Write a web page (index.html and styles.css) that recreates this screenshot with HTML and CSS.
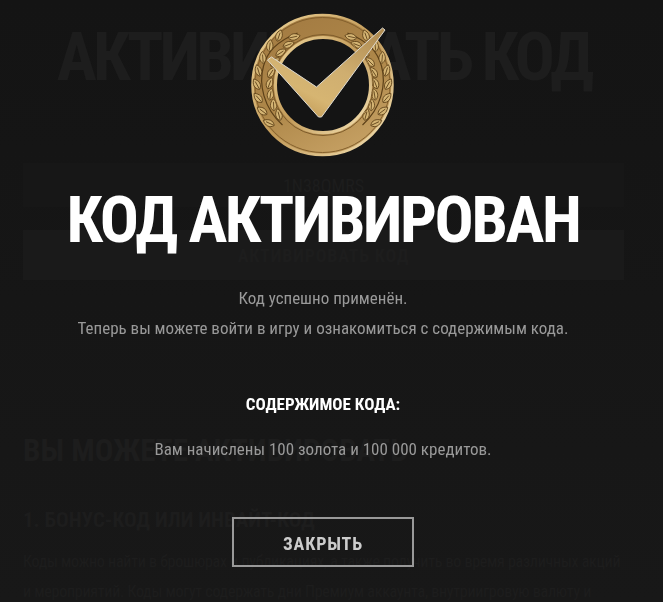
FILE: index.html
```html
<!DOCTYPE html>
<html lang="ru">
<head>
    <meta charset="UTF-8">
    <meta name="viewport" content="width=device-width, initial-scale=1.0">
    <title>Активировать код</title>
    <link rel="stylesheet" href="styles.css">
</head>
<body>
    <div class="page">
        <h1 class="page-title">АКТИВИРОВАТЬ КОД</h1>
        <div class="code-field">1N38QMRS</div>
        <div class="code-submit">АКТИВИРОВАТЬ КОД</div>
        <h2 class="page-sub">ВЫ МОЖЕТЕ АКТИВИРОВАТЬ</h2>
        <h3 class="page-sub3">1. БОНУС-КОД ИЛИ ИНВАЙТ-КОД</h3>
        <p class="page-text">Коды можно найти в брошюрах и публикациях, а также получить во время различных акций</p>
        <p class="page-text">и мероприятий. Коды могут содержать дни Премиум аккаунта, внутриигровую валюту и</p>
    </div>

    <div class="overlay">
        <svg class="medal" viewBox="3.500 0 180 170" width="180" height="170">
            <defs>
                <linearGradient id="ringGrad" x1="0.25" y1="0" x2="0.75" y2="1">
                    <stop offset="0" stop-color="#a37b42"/>
                    <stop offset="0.5" stop-color="#ae8749"/>
                    <stop offset="1" stop-color="#c7a265"/>
                </linearGradient>
                <linearGradient id="rimGrad" x1="0" y1="0" x2="1" y2="1">
                    <stop offset="0" stop-color="#f0d79c"/>
                    <stop offset="0.5" stop-color="#c29a58"/>
                    <stop offset="1" stop-color="#f8e7ba"/>
                </linearGradient>
                <linearGradient id="checkGrad" x1="0.9" y1="0" x2="0.2" y2="1">
                    <stop offset="0" stop-color="#b08c52"/>
                    <stop offset="0.45" stop-color="#cfae70"/>
                    <stop offset="0.75" stop-color="#d6b572"/>
                    <stop offset="1" stop-color="#bd9450"/>
                </linearGradient>
                <path id="leaf" d="M0 0C-4.500 -3 -4 -8 0 -12C4 -8 4.500 -3 0 0ZM0 -1V-9" fill="#d4b473" stroke="#5c4018" stroke-width="0.8"/>
                <g id="laurel">
                    <path d="M53 125C34 108 29 84 34 66C38 52 46 42 68 33" fill="none" stroke="#5c4018" stroke-width="1.2"/>
                    <use href="#leaf" transform="translate(50.900 120.400) rotate(-15)"/>
                    <use href="#leaf" transform="translate(44.700 125.500) rotate(-65)"/>
                    <use href="#leaf" transform="translate(44.400 110.800) rotate(-3)"/>
                    <use href="#leaf" transform="translate(37.400 114.500) rotate(-53)"/>
                    <use href="#leaf" transform="translate(40.100 100.200) rotate(9)"/>
                    <use href="#leaf" transform="translate(32.500 102.400) rotate(-41)"/>
                    <use href="#leaf" transform="translate(38.100 88.800) rotate(21)"/>
                    <use href="#leaf" transform="translate(30.100 89.400) rotate(-29)"/>
                    <use href="#leaf" transform="translate(38.600 77.400) rotate(33)"/>
                    <use href="#leaf" transform="translate(30.600 76.200) rotate(-17)"/>
                    <use href="#leaf" transform="translate(41.300 66.200) rotate(45)"/>
                    <use href="#leaf" transform="translate(33.800 63.500) rotate(-5)"/>
                    <use href="#leaf" transform="translate(46.400 55.900) rotate(57)"/>
                    <use href="#leaf" transform="translate(39.600 51.600) rotate(7)"/>
                    <use href="#leaf" transform="translate(53.500 46.800) rotate(69)"/>
                    <use href="#leaf" transform="translate(47.700 41.200) rotate(19)"/>
                    <use href="#leaf" transform="translate(58.900 38.100) rotate(78)"/>
                </g>
            </defs>
            <circle cx="93" cy="85" r="70" fill="url(#ringGrad)" stroke="url(#rimGrad)" stroke-width="2.5"/>
            <circle cx="93" cy="85" r="67.500" fill="none" stroke="#84602c" stroke-width="1"/>
            <use href="#laurel"/>
            <use href="#laurel" transform="translate(186 0) scale(-1 1)"/>
            <circle cx="93.500" cy="85" r="50.500" fill="none" stroke="#7d5b2a" stroke-width="1"/>
            <circle cx="93.500" cy="85" r="47.500" fill="#141414" stroke="url(#rimGrad)" stroke-width="3"/>
            <path d="M38 60L42 57L87 87L153 28L155.500 30L92 117L89 117Z" fill="url(#checkGrad)" stroke="#dedbd2" stroke-width="1" stroke-linejoin="round"/>
        </svg>
        <h2 class="modal-title">КОД АКТИВИРОВАН</h2>
        <p class="modal-text">Код успешно применён.</p>
        <p class="modal-text">Теперь вы можете войти в игру и ознакомиться с содержимым кода.</p>
        <h3 class="modal-label">СОДЕРЖИМОЕ КОДА:</h3>
        <p class="modal-text">Вам начислены 100 золота и 100 000 кредитов.</p>
        <button class="close-btn">ЗАКРЫТЬ</button>
    </div>
</body>
</html>
```
FILE: styles.css
```css
html, body {
    height: 100%;
}
body {
    margin: 0;
    overflow: hidden;
    background: linear-gradient(#141414, #181818);
    font-family: "Roboto Condensed", "Liberation Sans Narrow", Roboto, sans-serif;
    font-stretch: condensed;
}
.page {
    width: 601px;
    padding: 0 23px;
    color: #1d1d1d;
}
.page-title {
    margin: 0;
    padding-top: 18px;
    height: 163px;
    box-sizing: border-box;
    font-size: 67px;
    font-weight: 700;
    letter-spacing: -3.8px;
    text-align: center;
    white-space: nowrap;
}
.code-field {
    height: 44px;
    line-height: 46px;
    text-align: center;
    font-size: 18px;
    background: #171717;
}
.code-submit {
    height: 50px;
    margin-top: 23px;
    line-height: 52px;
    text-align: center;
    font-size: 18px;
    font-weight: 700;
    letter-spacing: 0.75px;
    background: #1a1a1a;
}
.page-sub {
    margin: 0;
    padding-top: 152px;
    font-size: 31px;
    line-height: 38px;
    white-space: nowrap;
}
.page-sub3 {
    margin: 0;
    padding-top: 37px;
    font-size: 21px;
    line-height: 26px;
    white-space: nowrap;
}
.page-text {
    margin: 0;
    padding-top: 6px;
    font-size: 16px;
    line-height: 24px;
    letter-spacing: -0.27px;
    white-space: nowrap;
}
.page-sub3 + .page-text {
    padding-top: 17px;
}
.overlay {
    position: fixed;
    top: 0;
    left: 0;
    width: 646px;
    height: 100%;
    display: flex;
    flex-direction: column;
    align-items: center;
    overflow: hidden;
}
.medal {
    flex: none;
}
.modal-title {
    margin: 13px 0 20px;
    font-size: 65px;
    line-height: 75px;
    font-weight: 700;
    letter-spacing: -2.4px;
    color: #fff;
}
.modal-text {
    margin: 10px 0 0;
    font-size: 17px;
    line-height: 20px;
    color: #999;
}
.modal-label {
    margin: 56px 0 15px;
    font-size: 17px;
    line-height: 20px;
    font-weight: 700;
    color: #fff;
}
.close-btn {
    width: 182px;
    height: 50px;
    margin-top: 58px;
    padding: 2px 0 0;
    flex: none;
    background: transparent;
    border: 2px solid #999;
    color: #ccc;
    font-family: inherit;
    font-stretch: condensed;
    font-size: 18px;
    font-weight: 700;
    letter-spacing: 0.85px;
}
```
